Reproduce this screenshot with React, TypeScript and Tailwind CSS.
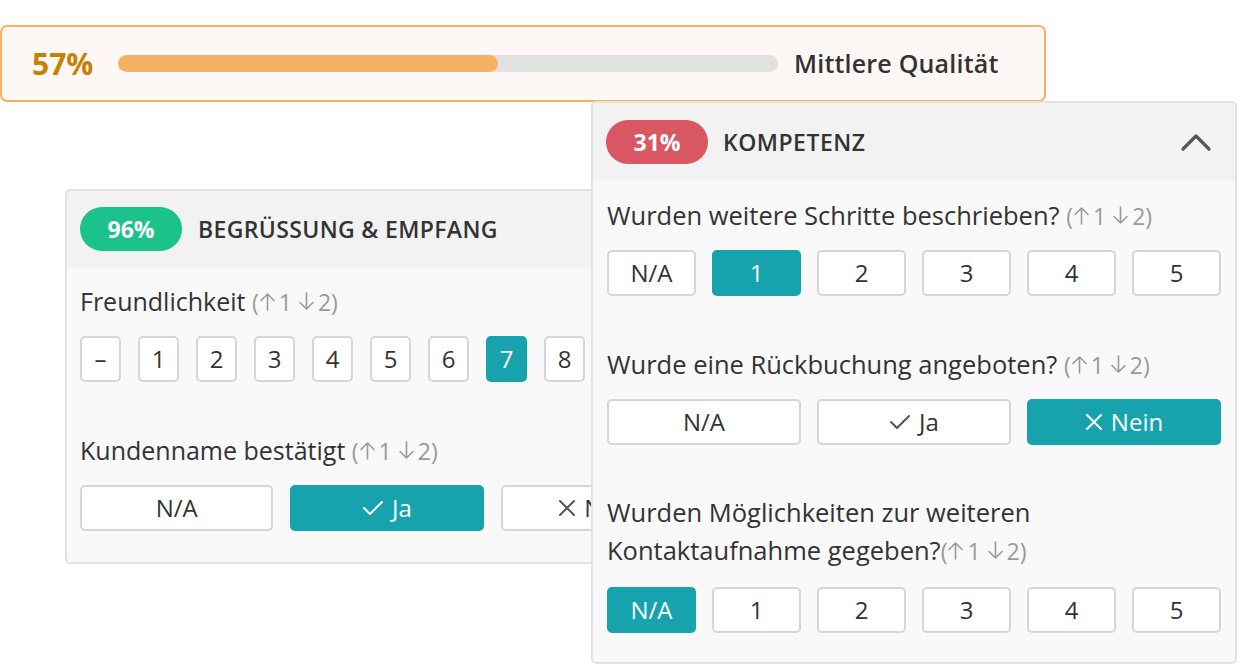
import React from "react";

const Check = ({ className = "" }: { className?: string }) => (
  <svg width="22" height="18" viewBox="0 0 22 18" fill="none" className={className}>
    <polyline points="2,9 8,15 20,3" stroke="currentColor" strokeWidth="2" strokeLinecap="round" strokeLinejoin="round" />
  </svg>
);

const Cross = ({ className = "" }: { className?: string }) => (
  <svg width="18" height="18" viewBox="0 0 18 18" fill="none" className={className}>
    <path d="M2 2 L16 16 M16 2 L2 16" stroke="currentColor" strokeWidth="2" strokeLinecap="round" />
  </svg>
);

const Arrow = ({ down = false }: { down?: boolean }) => (
  <svg width="17" height="19" viewBox="0 0 17 19" fill="none" className="inline-block align-baseline">
    {down ? (
      <path d="M8.5 1 V17 M2 10.5 L8.5 17 L15 10.5" stroke="currentColor" strokeWidth="1.6" strokeLinecap="round" strokeLinejoin="round" />
    ) : (
      <path d="M8.5 18 V2 M2 8.5 L8.5 2 L15 8.5" stroke="currentColor" strokeWidth="1.6" strokeLinecap="round" strokeLinejoin="round" />
    )}
  </svg>
);

const Hint = () => (
  <span className="text-[23px] text-[#9a9a9a]">
    (<Arrow />
    <span className="ml-[3px]">1</span> <Arrow down />
    <span className="ml-[3px]">2</span>)
  </span>
);

const Btn = ({
  active,
  className = "",
  children,
}: {
  active?: boolean;
  className?: string;
  children: React.ReactNode;
}) => (
  <div
    className={`flex items-center justify-center gap-2 h-[46px] rounded-[5px] text-[24px] ${
      active
        ? "bg-[#17a3ae] text-white border-2 border-[#17a3ae]"
        : "bg-white text-[#333] border-2 border-[#d6d6d6]"
    } ${className}`}
  >
    {children}
  </div>
);

const Badge = ({ value, color }: { value: string; color: string }) => (
  <div className={`flex items-center justify-center w-[102px] h-[44px] rounded-full text-white font-bold text-[23px] ${color}`}>
    {value}
  </div>
);

export default function App() {
  const scale = ["–", "1", "2", "3", "4", "5", "6", "7", "8", "9", "10"];

  return (
    <div
      className="relative w-[1237px] h-[665px] bg-white overflow-hidden text-[#333]"
      style={{ fontFamily: '"Open Sans", "DejaVu Sans", sans-serif' }}
    >
      {/* overall score */}
      <div className="absolute left-0 top-[25px] w-[1046px] h-[77px] rounded-[7px] border-2 border-[#f5b062] bg-[#fdf8f5] flex items-center pl-[30px]">
        <span className="text-[30px] font-bold text-[#c98000] w-[86px]">57%</span>
        <div className="w-[660px] h-[17px] rounded-full bg-[#e1e1e1] overflow-hidden">
          <div className="h-full w-[380px] rounded-full bg-[#f5b062]" />
        </div>
        <span className="ml-[16px] text-[25px] font-semibold text-[#333] tracking-[0.2px]">Mittlere Qualität</span>
      </div>

      {/* left card */}
      <div className="absolute left-[65px] top-[189px] w-[644px] rounded-[5px] border-2 border-[#e2e2e2] bg-[#f9f9f9] overflow-hidden">
        <div className="flex items-center h-[76px] px-[13px] bg-[#f2f2f2]">
          <Badge value="96%" color="bg-[#1bc28b]" />
          <span className="ml-[16px] text-[23px] font-semibold tracking-[0.35px]">BEGRÜSSUNG &amp; EMPFANG</span>
        </div>
        <div className="px-[13px] pt-[15px] pb-[31px]">
          <div className="text-[25px] leading-[38px]">
            Freundlichkeit <Hint />
          </div>
          <div className="flex gap-[17px] mt-[15px]">
            {scale.map((s) => (
              <Btn key={s} active={s === "7"} className="w-[41px] shrink-0">
                {s}
              </Btn>
            ))}
          </div>
          <div className="text-[25px] leading-[38px] mt-[49px]">
            Kundenname bestätigt <Hint />
          </div>
          <div className="grid grid-cols-3 gap-[17px] mt-[15px]">
            <Btn>N/A</Btn>
            <Btn active>
              <Check />
              Ja
            </Btn>
            <Btn>
              <Cross className="text-[#555]" />
              Nein
            </Btn>
          </div>
        </div>
      </div>

      {/* right card */}
      <div className="absolute left-[591px] top-[101px] w-[646px] h-[563px] rounded-[5px] border-2 border-[#e2e2e2] bg-[#f9f9f9] overflow-hidden">
        <div className="flex items-center h-[78px] px-[13px] bg-[#f2f2f2]">
          <Badge value="31%" color="bg-[#d85763]" />
          <span className="ml-[15px] text-[23px] font-semibold tracking-[0.5px]">KOMPETENZ</span>
          <svg width="32" height="20" viewBox="0 0 32 20" fill="none" className="ml-auto mr-[10px] text-[#555]">
            <polyline points="3,17 16,4 29,17" stroke="currentColor" strokeWidth="3.2" strokeLinecap="round" strokeLinejoin="round" />
          </svg>
        </div>
        <div className="px-[14px] pt-[15px]">
          <div className="text-[25.5px] leading-[38px]">
            Wurden weitere Schritte beschrieben? <Hint />
          </div>
          <div className="grid grid-cols-6 gap-[16px] mt-[15px]">
            <Btn>N/A</Btn>
            <Btn active>1</Btn>
            <Btn>2</Btn>
            <Btn>3</Btn>
            <Btn>4</Btn>
            <Btn>5</Btn>
          </div>
          <div className="text-[25.5px] leading-[38px] mt-[49px]">
            Wurde eine Rückbuchung angeboten? <Hint />
          </div>
          <div className="grid grid-cols-3 gap-[16px] mt-[15px]">
            <Btn>N/A</Btn>
            <Btn>
              <Check className="text-[#555]" />
              Ja
            </Btn>
            <Btn active>
              <Cross />
              Nein
            </Btn>
          </div>
          <div className="text-[25.5px] leading-[38px] mt-[48px]">
            Wurden Möglichkeiten zur weiteren
            <br />
            Kontaktaufnahme gegeben?<Hint />
          </div>
          <div className="grid grid-cols-6 gap-[16px] mt-[17px]">
            <Btn active>N/A</Btn>
            <Btn>1</Btn>
            <Btn>2</Btn>
            <Btn>3</Btn>
            <Btn>4</Btn>
            <Btn>5</Btn>
          </div>
        </div>
      </div>
    </div>
  );
}
